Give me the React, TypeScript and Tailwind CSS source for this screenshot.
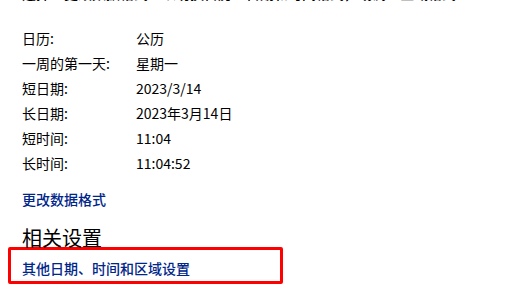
// Region settings: format values and related settings link

const rows: [string, string][] = [
  ['日历:', '公历'],
  ['一周的第一天:', '星期一'],
  ['短日期:', '2023/3/14'],
  ['长日期:', '2023年3月14日'],
  ['短时间:', '11:04'],
  ['长时间:', '11:04:52'],
];

export default function App() {
  return (
    <div
      className="w-[511px] h-[297px] overflow-hidden bg-white text-black"
      style={{ fontFamily: '"Noto Sans CJK SC", "Noto Sans", sans-serif' }}
    >
      <p className="-mt-[17px] h-[20px] pl-[22px] text-[14px] leading-[20px] font-medium whitespace-nowrap">
        选择“更改数据格式”以切换日历、日期和时间格式，或调整区域格式
      </p>

      <div className="mt-[23px] grid grid-cols-[114px_1fr] pl-[22px] text-[14px] leading-[25px]">
        {rows.map(([label, value]) => (
          <div key={label} className="contents">
            <span>{label}</span>
            <span>{value}</span>
          </div>
        ))}
      </div>

      <a className="mt-[11px] block h-[25px] pl-[22px] text-[14px] leading-[25px] font-medium text-[#00268a]">
        更改数据格式
      </a>

      <h2 className="mt-[15px] h-[22px] pl-[22px] text-[20px] leading-[22px]">相关设置</h2>

      <div className="-mt-[2px] ml-[8px] h-[37px] w-[275px] rounded-[2px] border-[3px] border-[#ff0000] pl-[11px] pt-[9px]">
        <a className="block text-[14px] leading-[18px] font-medium text-[#00268a]">
          其他日期、时间和区域设置
        </a>
      </div>
    </div>
  );
}
